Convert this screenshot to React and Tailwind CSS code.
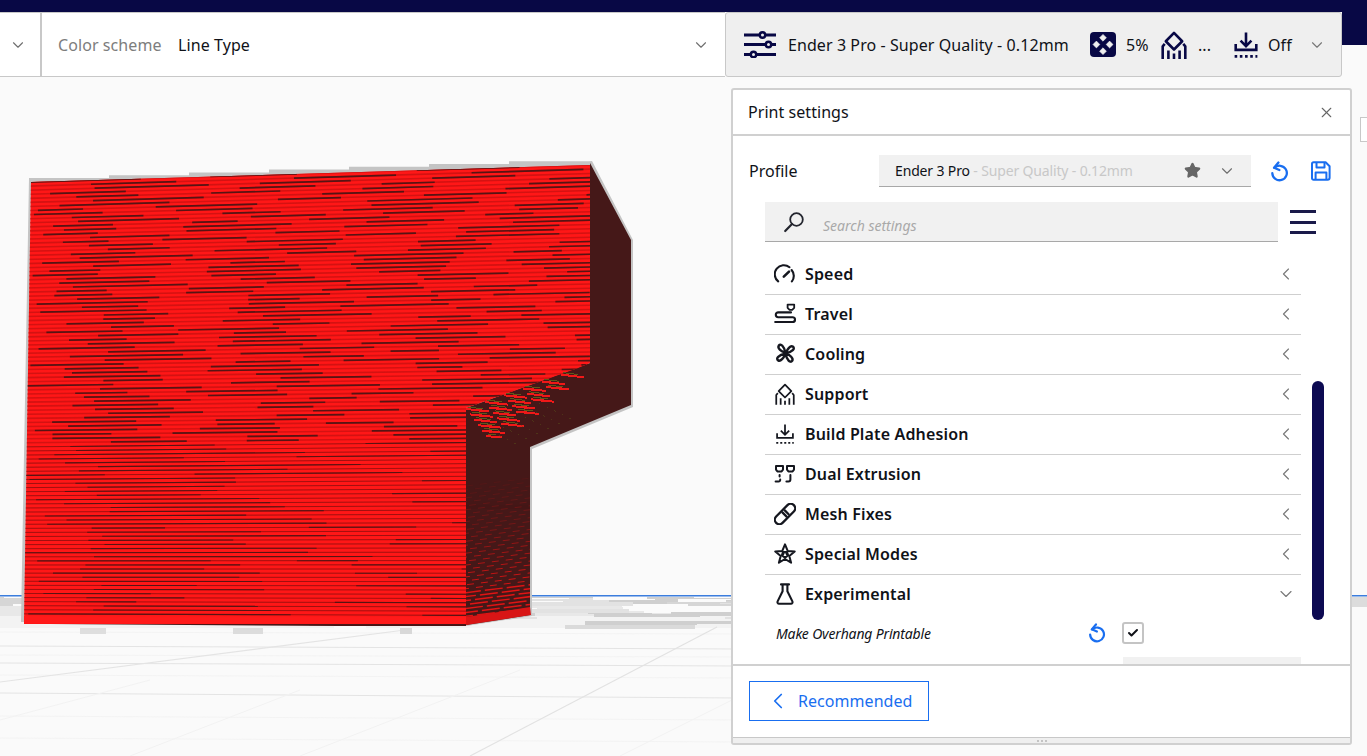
import React from 'react';
import { ChevronDown, ChevronLeft, X, Star, Check } from 'lucide-react';

const NAVY = '#080845';

function rng(seed) {
  let s = seed;
  return () => {
    s = (s * 16807) % 2147483647;
    return (s - 1) / 2147483646;
  };
}

// front face: y of a layer at x, t runs 0 (top) to 1 (bottom)
function layerY(t, x) {
  const topY = 182 - 0.0305 * (x - 30);
  const botY = 622 + 0.004 * (x - 24);
  return topY + (botY - topY) * t;
}

function FloorNoise() {
  const r = rng(77);
  const items = [];
  for (let i = 0; i < 130; i++) {
    const y = 597 + Math.floor(r() * r() * 30);
    const x = Math.floor(r() * 760);
    const w = 20 + Math.floor(r() * 130);
    const h = 1 + Math.floor(r() * 4);
    const g = r() > 0.6 ? '#fbfbfb' : r() > 0.5 ? '#cfcfcf' : '#e2e2e2';
    items.push(<rect key={i} x={x} y={y} width={w} height={h} fill={g} />);
  }
  return <g>{items}</g>;
}

function Floor() {
  const major = [[646, 649], [663, 666], [693, 698]];
  const minor = [[632, 634], [655, 657], [675, 678], [716, 720], [738, 742]];
  return (
    <g>
      <rect x="0" y="597" width="740" height="159" fill="#fafafa" />
      <rect x="0" y="597" width="740" height="9" fill="#d6d6d6" />
      <rect x="0" y="606" width="740" height="10" fill="#e8e8e8" />
      <rect x="0" y="616" width="740" height="12" fill="#f3f3f3" />
      <FloorNoise />
      <rect x="0" y="595" width="740" height="1.5" fill="#3b7ddd" />
      {major.map(([a, b], i) => (
        <line key={i} x1="0" y1={a} x2="740" y2={b} stroke="#e4e4e4" strokeWidth="1.1" />
      ))}
      {minor.map(([a, b], i) => (
        <line key={i} x1="0" y1={a} x2="740" y2={b} stroke="#f1f1f1" strokeWidth="0.8" />
      ))}
      <line x1="0" y1="682" x2="405" y2="630" stroke="#e4e4e4" strokeWidth="1.2" />
      <line x1="470" y1="756" x2="717" y2="627" stroke="#e2e2e2" strokeWidth="1.2" />
      <line x1="130" y1="756" x2="300" y2="690" stroke="#f2f2f2" />
      <line x1="300" y1="756" x2="520" y2="670" stroke="#f2f2f2" />
      <line x1="620" y1="756" x2="732" y2="700" stroke="#f2f2f2" />
      <line x1="0" y1="720" x2="150" y2="680" stroke="#f2f2f2" />
      <rect x="80" y="628" width="26" height="6" fill="#dedede" />
      <rect x="233" y="628" width="30" height="6" fill="#dcdcdc" />
      <rect x="400" y="628" width="12" height="6" fill="#d8d8d8" />
      <rect x="565" y="625" width="130" height="4" fill="#dadada" />
    </g>
  );
}

function FrontLayers() {
  const r = rng(4242);
  const items = [];
  const count = 108;
  for (let i = 0; i < count; i++) {
    const t = i / count;
    const y0 = layerY(t, 24);
    const y1 = layerY(t, 600);
    const at = (x) => y0 + ((y1 - y0) * (x - 24)) / 576;
    const lower = t > 0.6;
    items.push(
      <line key={`m${i}`} x1="24" y1={at(24)} x2="600" y2={at(600)} stroke={lower ? '#a01010' : '#d41212'} strokeWidth={lower ? 1 : 1.6} />
    );
    // staggered dark strokes in the upper layers, long and sparse in the lower ones
    let x = 24 + r() * 90;
    let k = 0;
    while (x < 600) {
      const len = lower ? 50 + r() * 240 : 45 + r() * 70;
      const gap = lower ? 80 + r() * 240 : 50 + r() * 70;
      items.push(
        <line key={`d${i}-${k}`} x1={x} y1={at(x)} x2={x + len} y2={at(x + len)} stroke="#561414" strokeWidth={lower ? 1.1 : 1.7} />
      );
      x += len + gap;
      k++;
    }
  }
  return <g clipPath="url(#front-face)">{items}</g>;
}

function SideDashes() {
  const items = [];
  for (let i = 0; i < 34; i++) {
    const y = 486 + i * 3.95;
    const a = i < 10 ? 0.08 + i * 0.02 : Math.min(1, 0.25 + (i - 10) / 24);
    items.push(
      <line key={i} x1="466" y1={y} x2="531" y2={y - 8} stroke="#e01414" strokeWidth={i > 26 ? 1.5 : 1} strokeDasharray={i > 26 ? '18 4' : '7 7'} strokeDashoffset={i * 5} opacity={a} />
    );
  }
  return <g clipPath="url(#side-lower)">{items}</g>;
}

function OverhangDashes() {
  const items = [];
  for (let i = 0; i < 11; i++) {
    const ax = 466 + i * 2;
    const ay = 409 + i * 2.7;
    const count = Math.max(1, Math.round((114 - i * 9) / 19));
    for (let k = 0; k < count; k++) {
      const x = ax + k * 19 + (i % 2) * 5;
      const y = ay - (k * 19 + (i % 2) * 5) * 0.36;
      items.push(
        <g key={`${i}-${k}`}>
          <line x1={x} y1={y} x2={x + 16} y2={y + 1.5} stroke="#f01818" strokeWidth="2" />
          <line x1={x + 2} y1={y - 2} x2={x + 10} y2={y - 1.4} stroke="#5f5a1a" strokeWidth="1" />
        </g>
      );
    }
  }
  for (let i = 0; i < 6; i++) {
    items.push(
      <line key={`o${i}`} x1={484 + i * 11} y1={428 - i * 5} x2={522 + i * 11} y2={447 - i * 5} stroke="#5a5a1a" strokeWidth="0.8" strokeDasharray="1.5 7" opacity="0.55" />
    );
  }
  return <g shapeRendering="crispEdges">{items}</g>;
}

function Model() {
  const front = '31,182 590,165 590,363 578,368 466,408 466,624 24,624';
  const side = '590,163 631,240 631,405 530,447 530,615 466,625 466,408 590,363';
  // stepped gray edge along the top of the shadow
  const steps = [];
  for (let i = 0; i < 7; i++) {
    const x = 29 + i * 80;
    const y = 178 - i * 2.8;
    steps.push(`${x},${y} ${x + 80},${y}`);
  }
  return (
    <g>
      <defs>
        <clipPath id="front-face"><polygon points={front} /></clipPath>
        <clipPath id="side-lower"><polygon points="466,470 530,447 530,615 466,625" /></clipPath>
      </defs>
      <polygon points={`${steps.join(' ')} 592,161 633,240 633,407 532,449 532,616 466,626 21,622`} fill="#c4c4c4" />
      <polygon points={side} fill="#451818" />
      <polygon points={front} fill="#ff1717" />
      <FrontLayers />
      <SideDashes />
      <OverhangDashes />
      <polygon points="24,616 466,617 466,624 24,623" fill="#ff1a1a" />
      <polygon points="466,617 530,607 531,615 466,625" fill="#d81515" />
      <polygon points="50,624 466,624 466,626 340,626" fill="#4a1616" />
    </g>
  );
}

function Scene() {
  return (
    <svg className="absolute inset-0 h-[756px] w-[1367px]" viewBox="0 0 1367 756">
      <Floor />
      <rect x="1351" y="595" width="16" height="1.5" fill="#3b7ddd" />
      <rect x="1351" y="597" width="16" height="10" fill="#dcdcdc" />
      <Model />
    </svg>
  );
}

function SlidersIcon() {
  return (
    <svg width="33" height="27" viewBox="0 0 33 27" fill="none" stroke={NAVY} strokeWidth="3">
      <path d="M0 4h15M22 4h10M0 13.5h21M28 13.5h4M0 23.5h6M13 23.5h19" />
      <circle cx="18.5" cy="4" r="2.7" strokeWidth="2.4" />
      <circle cx="24.5" cy="13.5" r="2.7" strokeWidth="2.4" />
      <circle cx="9.5" cy="23.5" r="2.7" strokeWidth="2.4" />
    </svg>
  );
}

function InfillIcon() {
  return (
    <svg width="26" height="25" viewBox="0 0 26 25">
      <rect width="26" height="25" rx="4" fill={NAVY} />
      <g fill="#efefef" stroke="#efefef" strokeWidth="0.6" strokeLinejoin="round">
        <path d="M13 2.4l3.4 3.4L13 9.200 9.600 5.800z" />
        <path d="M6.400 9.100l3.400 3.400-3.400 3.400L3 12.500z" />
        <path d="M19.600 9.100l3.400 3.400-3.400 3.400-3.400-3.400z" />
        <path d="M13 15.800l3.400 3.400-3.400 3.400-3.400-3.400z" />
      </g>
    </svg>
  );
}

function SupportIcon({ w = 26, h = 28, color = NAVY, stroke = 2.4 }) {
  return (
    <svg width={w} height={h} viewBox="0 0 24 26" fill="none" stroke={color} strokeWidth={stroke} strokeLinejoin="round">
      <path d="M12 1.800l7.600 7.700L12 17.200 4.400 9.500z" />
      <path d="M3.400 12L1.500 14.200V26M20.600 12l1.900 2.200V26M6.800 18v8M12 21v5M17.200 18v8" />
    </svg>
  );
}

function AdhesionIcon({ size = 26, color = NAVY, w = 2.4 }) {
  return (
    <svg width={size} height={size} viewBox="0 0 24 24" fill="none" stroke={color} strokeWidth={w}>
      <path d="M12 0.5v12M7 8l5 5 5-5" />
      <path d="M2.500 11v5.500h19V11" />
      <path d="M1.500 22.500h21" strokeDasharray="2.4 2.4" />
    </svg>
  );
}

function ResetIcon({ className }) {
  return (
    <svg className={className} viewBox="0 0 20 22" fill="none" stroke="#196ef0" strokeWidth="2.4" strokeLinecap="round" strokeLinejoin="round">
      <path d="M5.200 7.200A7.600 7.600 0 1 1 3 12.800" />
      <path d="M9.400 1.600L4.800 7l5.600 2.400" />
    </svg>
  );
}

function SaveIcon() {
  return (
    <svg width="20" height="20" viewBox="0 0 20 20" fill="none" stroke="#196ef0" strokeWidth="2" strokeLinejoin="round">
      <path d="M2.600 1.200h12l4 4v11.600a2 2 0 0 1-2 2H2.600a1.600 1.600 0 0 1-1.600-1.600V2.800a1.600 1.600 0 0 1 1.600-1.600z" />
      <path d="M5.500 1.400v5h8v-5M4.600 18.600v-7h10.800v7" />
    </svg>
  );
}

const INK = '#15171f';

const iconBase = { width: 22, height: 22, viewBox: '0 0 22 22', fill: 'none', stroke: INK, strokeWidth: 2.1, strokeLinecap: 'round', strokeLinejoin: 'round' };

function SpeedIcon() {
  return (
    <svg {...iconBase}>
      <path d="M4.200 18.400A9 9 0 0 1 15.500 4.200M17.600 7a9 9 0 0 1 .3 11.400" />
      <path d="M9.800 13.600l5.200-5" strokeWidth="2.600" />
    </svg>
  );
}

function TravelIcon() {
  return (
    <svg {...iconBase}>
      <path d="M13.600 1.600h6.600v3.200l-2 2h-2.600l-2-2z" strokeWidth="1.800" />
      <path d="M17 9.400H4.200a2.400 2.400 0 0 0 0 4.800h14.400a2.400 2.400 0 0 1 0 4.800H1.200" />
    </svg>
  );
}

function CoolingIcon() {
  return (
    <svg {...iconBase} width="23" height="23" strokeWidth="2.300">
      <path d="M10 10C7 9 3 6 4.600 3.400 6.400 1 9.800 4 11 10.400M11.600 10c1-3 4-7 6.400-5.600 2.600 1.800-.4 5.200-6.800 6.400" />
      <path d="M12 11.400c3 1 7 4 5.400 6.600-1.800 2.400-5.200-.6-6.400-7M10.400 12c-1 3-4 7-6.400 5.600-2.600-1.800.4-5.200 6.800-6.400" />
    </svg>
  );
}

function DualIcon() {
  return (
    <svg {...iconBase} strokeWidth="2">
      <path d="M2 3h7v3.600L7.600 8.400H3.400L2 6.600zM13 3h7v3.600l-1.400 1.800h-4.200L13 6.600z" />
      <path d="M5.600 12v1.400M1.600 18.600h3a1.600 1.600 0 0 0 1.600-1.600v-.6M16.400 12v4.600a2 2 0 0 1-2 2h-2" />
    </svg>
  );
}

function MeshIcon() {
  return (
    <svg {...iconBase} strokeWidth="2.300">
      <rect x="-1.500" y="6.500" width="25" height="9" rx="4.500" transform="rotate(-45 11 11)" />
      <path d="M8.400 9.400l4.200 4.200M10.800 7.400l3.800 3.800" />
    </svg>
  );
}

function ModesIcon() {
  return (
    <svg {...iconBase} strokeWidth="2">
      <path d="M11 1.400l2.700 6.500 7 .5-5.400 4.500 1.800 6.800L11 16l-6.100 3.700 1.800-6.800L1.300 8.400l7-.5z" />
      <path d="M8.200 7.900h5.600l1.500 4.900L11 16l-4.300-3.200z" fill={INK} stroke="none" />
      <path d="M11 9.600l1.500 3.400-3 0z" fill="#fff" stroke="none" />
    </svg>
  );
}

function FlaskIcon() {
  return (
    <svg {...iconBase}>
      <path d="M7 1.400h8M8.600 1.600v6.600L3.600 18.400a1.600 1.600 0 0 0 1.400 2.300h12a1.600 1.600 0 0 0 1.400-2.300L13.400 8.200V1.600" />
    </svg>
  );
}

const categories = [
  { label: 'Speed', icon: <SpeedIcon /> },
  { label: 'Travel', icon: <TravelIcon /> },
  { label: 'Cooling', icon: <CoolingIcon /> },
  { label: 'Support', icon: <SupportIcon w={20} h={22} color={INK} stroke={2.1} /> },
  { label: 'Build Plate Adhesion', icon: <AdhesionIcon size={20} color={INK} w={2.1} /> },
  { label: 'Dual Extrusion', icon: <DualIcon /> },
  { label: 'Mesh Fixes', icon: <MeshIcon /> },
  { label: 'Special Modes', icon: <ModesIcon /> },
  { label: 'Experimental', icon: <FlaskIcon />, open: true },
];

function CategoryRow({ label, icon, open }) {
  return (
    <div className={'flex h-[40px] items-center pb-[2px] ' + (open ? '' : 'border-b border-[#cfcfcf]')}>
      <span className="flex w-[40px] justify-center">{icon}</span>
      <span className="flex-1 text-[16px] font-semibold tracking-[0.15px] text-[#101218]">{label}</span>
      {open ? (
        <ChevronDown className="mr-[5px] h-[20px] w-[20px] text-[#7a7a7a]" strokeWidth={1.4} />
      ) : (
        <ChevronLeft className="mr-[5px] h-[20px] w-[20px] text-[#7a7a7a]" strokeWidth={1.4} />
      )}
    </div>
  );
}

function Toolbar() {
  return (
    <div className="flex items-start">
      <div className="flex h-[65px] w-[725px] border-y border-[#c8c8c8] bg-white">
        <div className="flex w-[42px] items-center border-r-2 border-[#c8c8c8] pl-[9px]">
          <ChevronDown className="h-[18px] w-[18px] text-[#6f6f6f]" strokeWidth={1.5} />
        </div>
        <div className="flex flex-1 items-center pl-[16px] text-[16px] tracking-[0.08px]">
          <span className="w-[120px] text-[#7d7d7d]">Color scheme</span>
          <span className="flex-1 text-[#101218]">Line Type</span>
          <ChevronDown className="mr-[15px] h-[18px] w-[18px] text-[#6f6f6f]" strokeWidth={1.5} />
        </div>
      </div>
      <div className="flex h-[65px] w-[617px] items-center rounded-[3px] border border-[#c8c8c8] bg-[#efefef] pl-[18px] text-[16px] tracking-[0.08px] text-[#101218]">
        <SlidersIcon />
        <span className="ml-[11px] w-[302px] whitespace-nowrap">Ender 3 Pro - Super Quality - 0.12mm</span>
        <InfillIcon />
        <span className="ml-[10px] w-[35px]">5%</span>
        <SupportIcon />
        <span className="ml-[11px] w-[35px]">...</span>
        <AdhesionIcon />
        <span className="ml-[9px] w-[40px]">Off</span>
        <ChevronDown className="h-[18px] w-[18px] text-[#777777]" strokeWidth={1.5} />
      </div>
      <div className="h-[33px] flex-1 bg-[#080845]" />
    </div>
  );
}

function PrintSettings() {
  return (
    <div className="absolute left-[731px] top-[88px] flex h-[657px] w-[621px] flex-col rounded-[3px] border-2 border-[#d0d0d0] bg-white text-[#101218] [font-family:'Noto_Sans',sans-serif]">
      <div className="flex h-[46px] items-center justify-between border-b-2 border-[#d0d0d0] px-[15px] text-[16px] tracking-[0.05px]">
        <span>Print settings</span>
        <X className="h-[17px] w-[17px] text-[#666666]" strokeWidth={1.6} />
      </div>

      <div className="relative min-h-0 flex-1 overflow-hidden">
        <div className="mt-[19px] flex h-[32px] items-center pl-[16px] text-[16px]">
          <span className="w-[130px]">Profile</span>
          <div className="flex h-[32px] w-[372px] items-center border-b border-[#a8a8a8] bg-[#f1f1f1] pl-[16px] text-[14px] tracking-[-0.15px]">
            <span className="flex-1 whitespace-nowrap">
              Ender 3 Pro<span className="text-[#c8c8c8]"> - Super Quality - 0.12mm</span>
            </span>
            <Star className="h-[17px] w-[17px] fill-[#666666] text-[#666666]" />
            <ChevronDown className="ml-[17px] mr-[15px] h-[18px] w-[18px] text-[#6f6f6f]" strokeWidth={1.5} />
          </div>
          <ResetIcon className="ml-[18px] h-[21px] w-[20px]" />
          <span className="ml-[22px]"><SaveIcon /></span>
        </div>

        <div className="mt-[15px] flex items-center pl-[32px]">
          <div className="flex h-[40px] w-[513px] items-center border-b border-[#a8a8a8] bg-[#f1f1f1] pl-[18px] text-[14px] italic text-[#a9a9a9]">
            <svg width="22" height="22" viewBox="0 0 22 22" fill="none" stroke="#23252e" strokeWidth="1.8" strokeLinecap="round">
              <circle cx="13.500" cy="8.500" r="6.300" />
              <path d="M9 13L2.200 20" strokeWidth="2.200" />
            </svg>
            <span className="ml-[18px] mt-[8px]">Search settings</span>
          </div>
          <div className="ml-[12px] flex h-[24px] w-[26px] flex-col justify-between">
            <div className="h-[3px] bg-[#1a1a4a]" />
            <div className="h-[3px] bg-[#1a1a4a]" />
            <div className="h-[3px] bg-[#1a1a4a]" />
          </div>
        </div>

        <div className="flex">
          <div className="ml-[32px] mt-[13px] w-[536px]">
            {categories.map((c) => (
              <CategoryRow key={c.label} {...c} />
            ))}
            <div className="mt-[7px] flex h-[22px] items-center pl-[11px] text-[14px] italic tracking-[-0.17px] text-[#101218]">
              <span className="w-[311px] whitespace-nowrap">Make Overhang Printable</span>
              <ResetIcon className="h-[20px] w-[19px]" />
              <span className="ml-[16px] flex h-[22px] w-[22px] items-center justify-center rounded-[3px] border-2 border-[#c4c4c4] bg-white">
                <Check className="h-[12px] w-[12px] text-[#101218]" strokeWidth={4} />
              </span>
            </div>
            <div className="ml-[358px] mt-[13px] h-[10px] w-[178px] bg-[#f1f1f1]" />
          </div>
          <div className="ml-[11px] mt-[139px] h-[239px] w-[12px] rounded-full bg-[#0d0a52]" />
        </div>
      </div>

      <div className="flex h-[73px] items-start border-t-2 border-[#d0d0d0] pl-[16px] pt-[15px]">
        <div className="flex h-[40px] w-[180px] items-center border border-[#196ef0] pb-[1px] pl-[15px] text-[16px] tracking-[0.05px] text-[#196ef0]">
          <ChevronLeft className="h-[26px] w-[26px]" strokeWidth={1.6} />
          <span className="ml-[7px]">Recommended</span>
        </div>
      </div>

      <div className="flex h-[6px] items-center justify-center gap-[2px] border-t border-[#c8c8c8] bg-[#efefef]">
        <span className="h-[2px] w-[2px] bg-[#c4c4c4]" />
        <span className="h-[2px] w-[2px] bg-[#c4c4c4]" />
        <span className="h-[2px] w-[2px] bg-[#c4c4c4]" />
      </div>
    </div>
  );
}

export default function App() {
  return (
    <div className="relative h-[756px] w-[1367px] overflow-hidden bg-[#fafafa] [font-family:'Noto_Sans',sans-serif]">
      <Scene />
      <div className="relative">
        <div className="h-[12px] bg-[#080845]" />
        <Toolbar />
      </div>
      <PrintSettings />
      <div className="absolute left-[1360px] top-[117px] h-[25px] w-[10px] border border-[#c8c8c8] bg-white" />
    </div>
  );
}
